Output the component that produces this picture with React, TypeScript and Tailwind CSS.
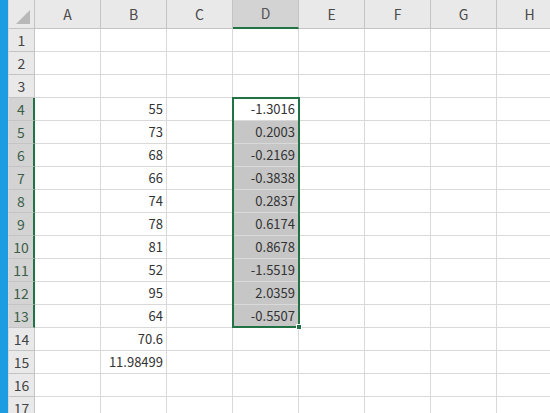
import React from "react";

const cols = ["A", "B", "C", "D", "E", "F", "G", "H"];
const bVals: Record<number, string> = {
  4: "55", 5: "73", 6: "68", 7: "66", 8: "74", 9: "78", 10: "81", 11: "52", 12: "95", 13: "64", 14: "70.6", 15: "11.98499",
};
const dVals: Record<number, string> = {
  4: "-1.3016", 5: "0.2003", 6: "-0.2169", 7: "-0.3838", 8: "0.2837", 9: "0.6174", 10: "0.8678", 11: "-1.5519", 12: "2.0359", 13: "-0.5507",
};
const rows = Array.from({ length: 17 }, (_, i) => i + 1);

export default function App() {
  return (
    <div className="w-[550px] h-[413px] overflow-hidden bg-white flex" style={{ fontFamily: '"Noto Sans CJK JP", "Noto Sans", sans-serif' }}>
      <div className="w-[8px] shrink-0 bg-[#1c9de2]" />
      <div className="relative shrink-0">
        <div className="grid grid-cols-[27px_repeat(8,66px)] grid-rows-[29px_repeat(17,23px)]">
          <div className="bg-[#e9e9e9] border-r border-b border-[#c4c4c4] border-l border-l-[#d8d8d8] flex items-end justify-end p-[4px]">
            <svg width="14" height="14" viewBox="0 0 14 14"><polygon points="14,0 14,14 0,14" fill="#b8b8b8" /></svg>
          </div>
          {cols.map((c) => (
            <div
              key={c}
              className={
                c === "D"
                  ? "bg-[#d3d3d3] border-r border-[#c4c4c4] border-b-2 border-b-[#217346] flex items-center justify-center text-[14px] text-[#555]"
                  : "bg-[#e9e9e9] border-r border-b border-[#c4c4c4] flex items-center justify-center text-[14px] text-[#4a4a4a]"
              }
            >
              {c}
            </div>
          ))}
          {rows.map((r) => {
            const sel = r >= 4 && r <= 13;
            return (
              <React.Fragment key={r}>
                <div
                  className={
                    sel
                      ? "bg-[#d3d3d3] border-b border-[#c4c4c4] border-r-2 border-r-[#217346] border-l border-l-[#d8d8d8] flex items-center justify-center text-[14px] text-[#3d5e4a]"
                      : "bg-[#e9e9e9] border-b border-r border-[#c4c4c4] border-l border-l-[#d8d8d8] flex items-center justify-center text-[14px] text-[#444]"
                  }
                >
                  {r}
                </div>
                {cols.map((c) => {
                  const val = c === "B" ? bVals[r] : c === "D" ? dVals[r] : undefined;
                  const fill = c === "D" && r >= 5 && r <= 13;
                  return (
                    <div
                      key={c}
                      className={
                        (fill ? "bg-[#c6c6c6] " : "bg-white ") +
                        "border-r border-b border-[#d9d9d9] flex items-center justify-end pr-[3px] text-[13px] text-[#333]"
                      }
                    >
                      {val}
                    </div>
                  );
                })}
              </React.Fragment>
            );
          })}
        </div>
        <div className="absolute left-[224px] top-[97px] w-[68px] h-[231px] border-2 border-[#217346] pointer-events-none" />
        <div className="absolute left-[288px] top-[324px] w-[6px] h-[6px] bg-[#217346] border border-white" />
      </div>
    </div>
  );
}
